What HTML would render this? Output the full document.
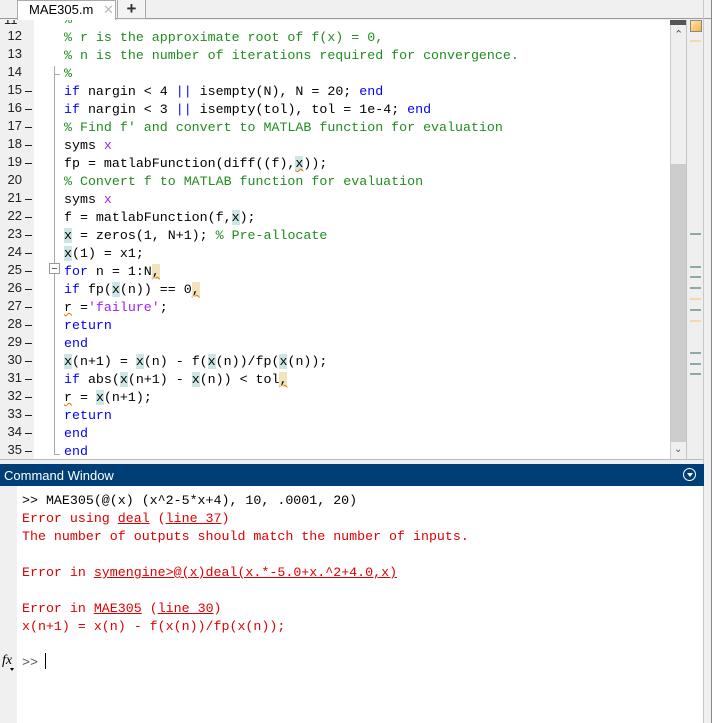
<!DOCTYPE html>
<html><head><style>
*{margin:0;padding:0;box-sizing:border-box}
body{width:712px;height:723px;overflow:hidden;background:#f0f0f0;position:relative;font-family:"Liberation Sans",sans-serif}
.abs{position:absolute}
.mono{font-family:"Liberation Mono",monospace;font-size:13.3px;white-space:pre}
.ln{position:absolute;left:0;width:22px;text-align:right;font-size:13px;color:#222}
.dash{position:absolute;left:25px;width:7px;height:1px;background:#222}
.code{position:absolute;left:64px}
.c{color:#228b22}.k{color:#0000ff}.p{color:#a020f0}
.h{background:#cce6e6}.w{background:#f3e3bd}
.sq{text-decoration:underline wavy #e07b00;text-decoration-thickness:1px}
.e{color:#e00000}
.u{text-decoration:underline}
.mk{position:absolute;left:690px;width:11px;height:2px;background:#8fa8a8}
.mo{background:#f5d9a8}
</style></head><body>
<!-- tab bar -->
<div class="abs" style="left:0;top:0;width:712px;height:19px;background:#f0f0f0;border-bottom:1px solid #999"></div>
<div class="abs" style="left:17px;top:0;width:99px;height:20px;background:#fff;border:1px solid #aaa;border-bottom:none;font-size:13px;padding:1px 0 0 11px">MAE305.m<span style="position:absolute;left:85px;top:1px;color:#bbb">✕</span></div>
<div class="abs" style="left:117px;top:0;width:29px;height:19px;background:#f3f3f3;border:1px solid #aaa;border-top:none;font-size:17px;font-weight:bold;text-align:center;line-height:17px;color:#333">+</div>
<!-- editor -->
<div class="abs" style="left:0;top:20px;width:703px;height:440px;background:#fff"></div>
<div class="abs" style="left:0;top:20px;width:34px;height:440px;background:#f0f0f0"></div>
<div class="abs" style="left:54px;top:66px;width:1px;height:389px;background:#aaa"></div>
<div class="abs" style="left:54px;top:454px;width:6px;height:1px;background:#aaa"></div>
<div class="abs" style="left:54px;top:74px;width:6px;height:1px;background:#aaa"></div>
<div class="abs" style="left:49px;top:263px;width:11px;height:11px;border:1px solid #999;background:#fff"><div style="position:absolute;left:2px;top:4px;width:5px;height:1px;background:#666"></div></div>
<div class="abs" style="left:0;top:459px;width:704px;height:1px;background:#bbb"></div>
<div class="abs" style="left:670px;top:20px;width:1px;height:440px;background:#ccc"></div>
<div class="abs" style="left:671px;top:20px;width:16px;height:439px;background:#efefef"></div>
<div class="abs" style="left:670px;top:20px;width:16px;height:5px;background:#555"></div>
<div class="abs" style="left:671px;top:164px;width:15px;height:278px;background:#cdcdcd"></div>
<div class="abs" style="left:674px;top:28px;font-size:11px;color:#555">⌃</div>
<div class="abs" style="left:674px;top:444px;font-size:10px;color:#555">⌄</div>
<div class="abs" style="left:686px;top:20px;width:1px;height:440px;background:#c4c4c4"></div>
<div class="abs" style="left:687px;top:20px;width:16px;height:439px;background:#efefef"></div>
<div class="abs" style="left:690px;top:20px;width:12px;height:12px;background:linear-gradient(135deg,#ffe7b0,#ffae40);border:1px solid #888"></div>
<div class="abs" style="left:690px;top:40px;width:11px;height:2px;background:#f5d9a8"></div>
<div class="mk" style="top:233px"></div>
<div class="mk" style="top:266px"></div>
<div class="mk" style="top:276px"></div>
<div class="mk" style="top:287px"></div>
<div class="mk mo" style="top:298px"></div>
<div class="mk" style="top:309px"></div>
<div class="mk mo" style="top:320px"></div>
<div class="mk" style="top:352px"></div>
<div class="mk" style="top:363px"></div>
<div class="mk" style="top:373px"></div>
<div class="abs" style="left:703px;top:0;width:1px;height:723px;background:#c8c8c8"></div>
<div class="abs" style="left:711px;top:0;width:1px;height:723px;background:#888"></div>

<div class="abs" style="left:0;top:20px;width:660px;height:7px;overflow:hidden">
<div class="abs mono" style="left:64px;top:-8px;color:#228b22">%</div>
<div class="abs" style="left:4px;top:-8px;font-size:13px;color:#222">11</div>
</div>
<div id="lines"></div>
<script>
var L=[
[12,0,'<span class="c">% r is the approximate root of f(x) = 0,</span>'],
[13,0,'<span class="c">% n is the number of iterations required for convergence.</span>'],
[14,0,'<span class="c">%</span>'],
[15,1,'<span class="k">if</span> nargin &lt; 4 <span class="k">||</span> isempty(N), N = 20; <span class="k">end</span>'],
[16,1,'<span class="k">if</span> nargin &lt; 3 <span class="k">||</span> isempty(tol), tol = 1e-4; <span class="k">end</span>'],
[17,1,'<span class="c">% Find f\' and convert to MATLAB function for evaluation</span>'],
[18,1,'syms <span class="p">x</span>'],
[19,1,'fp = matlabFunction(diff((f),<span class="h sq">x</span>));'],
[20,0,'<span class="c">% Convert f to MATLAB function for evaluation</span>'],
[21,1,'syms <span class="p">x</span>'],
[22,1,'f = matlabFunction(f,<span class="h">x</span>);'],
[23,1,'<span class="h">x</span> = zeros(1, N+1); <span class="c">% Pre-allocate</span>'],
[24,1,'<span class="h">x</span>(1) = x1;'],
[25,1,'<span class="k">for</span> n = 1:N<span class="w sq">,</span>'],
[26,1,'<span class="k">if</span> fp(<span class="h">x</span>(n)) == 0<span class="w sq">,</span>'],
[27,1,'<span class="sq">r</span> =<span class="p">\'failure\'</span>;'],
[28,1,'<span class="k">return</span>'],
[29,1,'<span class="k">end</span>'],
[30,1,'<span class="h">x</span>(n+1) = <span class="h">x</span>(n) - f(<span class="h">x</span>(n))/fp(<span class="h">x</span>(n));'],
[31,1,'<span class="k">if</span> abs(<span class="h">x</span>(n+1) - <span class="h">x</span>(n)) &lt; tol<span class="w sq">,</span>'],
[32,1,'<span class="sq">r</span> = <span class="h">x</span>(n+1);'],
[33,1,'<span class="k">return</span>'],
[34,1,'<span class="k">end</span>'],
[35,1,'<span class="k">end</span>']];
var s='';
L.forEach(function(l,i){var y=28+i*18;
s+='<div class="ln" style="top:'+y+'px">'+l[0]+'</div>';
if(l[1])s+='<div class="dash" style="top:'+(y+9)+'px"></div>';
s+='<div class="code mono" style="top:'+(y+1)+'px;height:17px;line-height:17px">'+l[2]+'</div>';});
document.getElementById('lines').innerHTML=s;
</script>

<!-- command window -->
<div class="abs" style="left:0;top:464px;width:704px;height:22px;background:#003f75;color:#fff;font-size:13px;padding:4px 0 0 4px">Command Window</div>
<div class="abs" style="left:683px;top:468px;width:13px;height:13px;border:1.5px solid #fff;border-radius:50%"><div style="position:absolute;left:2.5px;top:3.5px;border-left:3.5px solid transparent;border-right:3.5px solid transparent;border-top:4px solid #fff"></div></div>
<div class="abs" style="left:17px;top:486px;width:686px;height:237px;background:#fff"></div>
<div class="abs mono" style="left:22px;top:492px;line-height:18px"><span>&gt;&gt; MAE305(@(x) (x^2-5*x+4), 10, .0001, 20)</span>
<span class="e">Error using <span class="u">deal</span> (<span class="u">line 37</span>)</span>
<span class="e">The number of outputs should match the number of inputs.</span>

<span class="e">Error in <span class="u">symengine&gt;@(x)deal(x.*-5.0+x.^2+4.0,x)</span></span>

<span class="e">Error in <span class="u">MAE305</span> (<span class="u">line 30</span>)</span>
<span class="e">x(n+1) = x(n) - f(x(n))/fp(x(n));</span>

<span style="color:#555">&gt;&gt;</span> </div>
<div class="abs" style="left:45px;top:653px;width:1px;height:16px;background:#000"></div>
<div class="abs" style="left:2px;top:653px;font-family:'Liberation Serif',serif;font-style:italic;font-size:14px">fx</div>
<div class="abs" style="left:10px;top:668px;border-left:2px solid transparent;border-right:2px solid transparent;border-top:3px solid #000"></div>
</body></html>
